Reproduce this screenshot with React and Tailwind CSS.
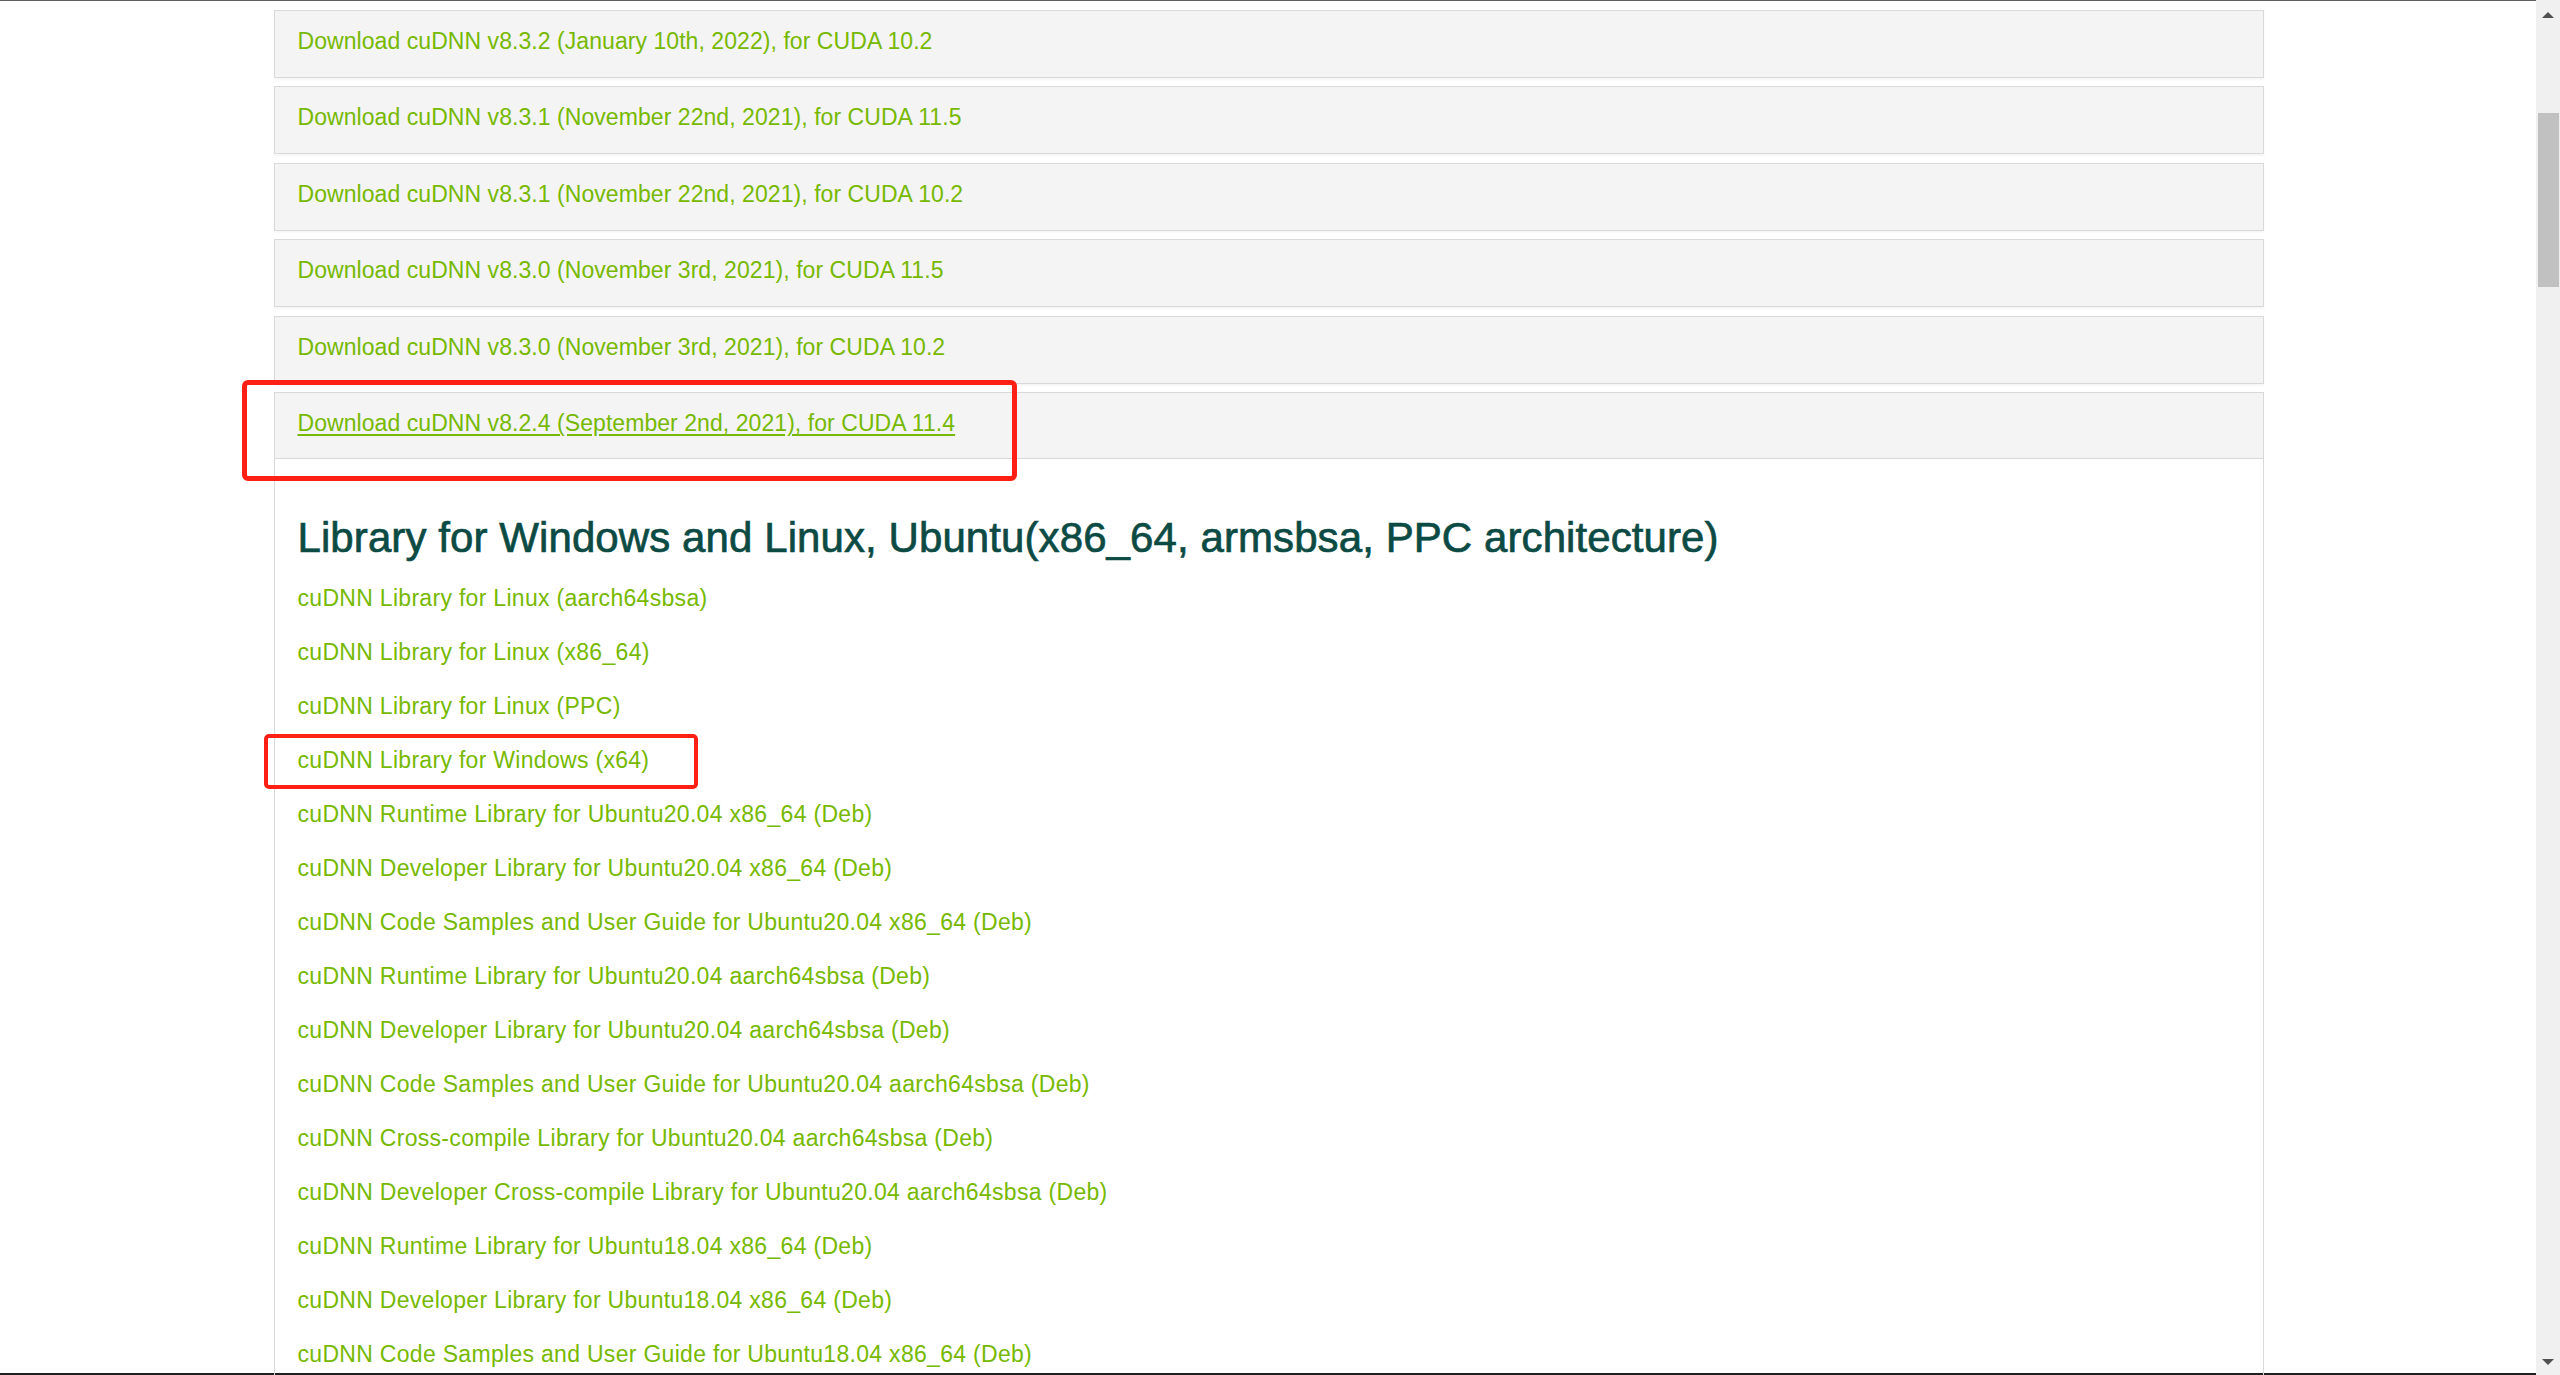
import React from 'react';

const releases = [
  'Download cuDNN v8.3.2 (January 10th, 2022), for CUDA 10.2',
  'Download cuDNN v8.3.1 (November 22nd, 2021), for CUDA 11.5',
  'Download cuDNN v8.3.1 (November 22nd, 2021), for CUDA 10.2',
  'Download cuDNN v8.3.0 (November 3rd, 2021), for CUDA 11.5',
  'Download cuDNN v8.3.0 (November 3rd, 2021), for CUDA 10.2',
];

const libraries = [
  'cuDNN Library for Linux (aarch64sbsa)',
  'cuDNN Library for Linux (x86_64)',
  'cuDNN Library for Linux (PPC)',
  'cuDNN Library for Windows (x64)',
  'cuDNN Runtime Library for Ubuntu20.04 x86_64 (Deb)',
  'cuDNN Developer Library for Ubuntu20.04 x86_64 (Deb)',
  'cuDNN Code Samples and User Guide for Ubuntu20.04 x86_64 (Deb)',
  'cuDNN Runtime Library for Ubuntu20.04 aarch64sbsa (Deb)',
  'cuDNN Developer Library for Ubuntu20.04 aarch64sbsa (Deb)',
  'cuDNN Code Samples and User Guide for Ubuntu20.04 aarch64sbsa (Deb)',
  'cuDNN Cross-compile Library for Ubuntu20.04 aarch64sbsa (Deb)',
  'cuDNN Developer Cross-compile Library for Ubuntu20.04 aarch64sbsa (Deb)',
  'cuDNN Runtime Library for Ubuntu18.04 x86_64 (Deb)',
  'cuDNN Developer Library for Ubuntu18.04 x86_64 (Deb)',
  'cuDNN Code Samples and User Guide for Ubuntu18.04 x86_64 (Deb)',
];

function Scrollbar() {
  return (
    <div className="relative w-[24px] h-full bg-[#f0f0f0] flex flex-col items-center shrink-0">
      <svg width="12" height="6" viewBox="0 0 12 6" className="mt-[12px]">
        <polygon points="0,6 6,0 12,6" fill="#505050" />
      </svg>
      <div className="mt-[95px] w-[21px] h-[174px] bg-[#c1c1c1] ml-[1px]"></div>
      <div className="flex-1"></div>
      <svg width="12" height="6" viewBox="0 0 12 6" className="mb-[10px]">
        <polygon points="0,0 12,0 6,6" fill="#505050" />
      </svg>
    </div>
  );
}

export default function App() {
  return (
    <div
      className="relative w-[2560px] h-[1375px] overflow-hidden bg-white flex"
      style={{ fontFamily: '"Liberation Sans", Arial, sans-serif' }}
    >
      <div className="w-[2536px] h-full flex flex-col border-t border-t-[#5f5f5f] border-b-2 border-b-[#1f1f1f]">
        <div className="ml-[274px] w-[1990px] pt-[8.5px]">
          {/* collapsed release rows */}
          {releases.map((r) => (
            <div
              key={r}
              className="h-[68px] mb-[8.6px] bg-[#f4f4f4] border border-[#d9d9d9] shadow-[0_2px_2px_rgba(0,0,0,0.04)] pl-[22.5px] pt-[19px]"
            >
              <a className="text-[23px] leading-[23px] tracking-[0.06px] text-[#76b900] antialiased">{r}</a>
            </div>
          ))}

          {/* expanded release */}
          <div className="border-x border-t border-[#d9d9d9] h-[1000px]">
            <div className="h-[66px] bg-[#f4f4f4] border-b border-[#d9d9d9] pl-[22.5px] pt-[19px]">
              <a className="text-[23px] leading-[23px] tracking-[0.06px] text-[#76b900] underline underline-offset-[3px]">
                Download cuDNN v8.2.4 (September 2nd, 2021), for CUDA 11.4
              </a>
            </div>
            <div className="pl-[22.5px]">
              <h2 className="mt-[57.5px] text-[42px] leading-[42px] tracking-[0.09px] text-[#0c4a44] [-webkit-text-stroke:0.7px_#0c4a44]">
                Library for Windows and Linux, Ubuntu(x86_64, armsbsa, PPC architecture)
              </h2>
              <div className="mt-[28.5px] flex flex-col gap-[31px]">
                {libraries.map((l) => (
                  <a key={l} className="text-[23px] leading-[23px] tracking-[0.3px] text-[#76b900]">
                    {l}
                  </a>
                ))}
              </div>
            </div>
          </div>
        </div>
      </div>
      <Scrollbar />

      {/* annotation boxes */}
      <div className="absolute left-[242px] top-[380px] w-[775px] h-[101px] border-[5px] border-[#fe2015] rounded-[6px]"></div>
      <div className="absolute left-[264px] top-[734px] w-[434px] h-[55px] border-[4px] border-[#fe2015] rounded-[5px]"></div>
    </div>
  );
}
